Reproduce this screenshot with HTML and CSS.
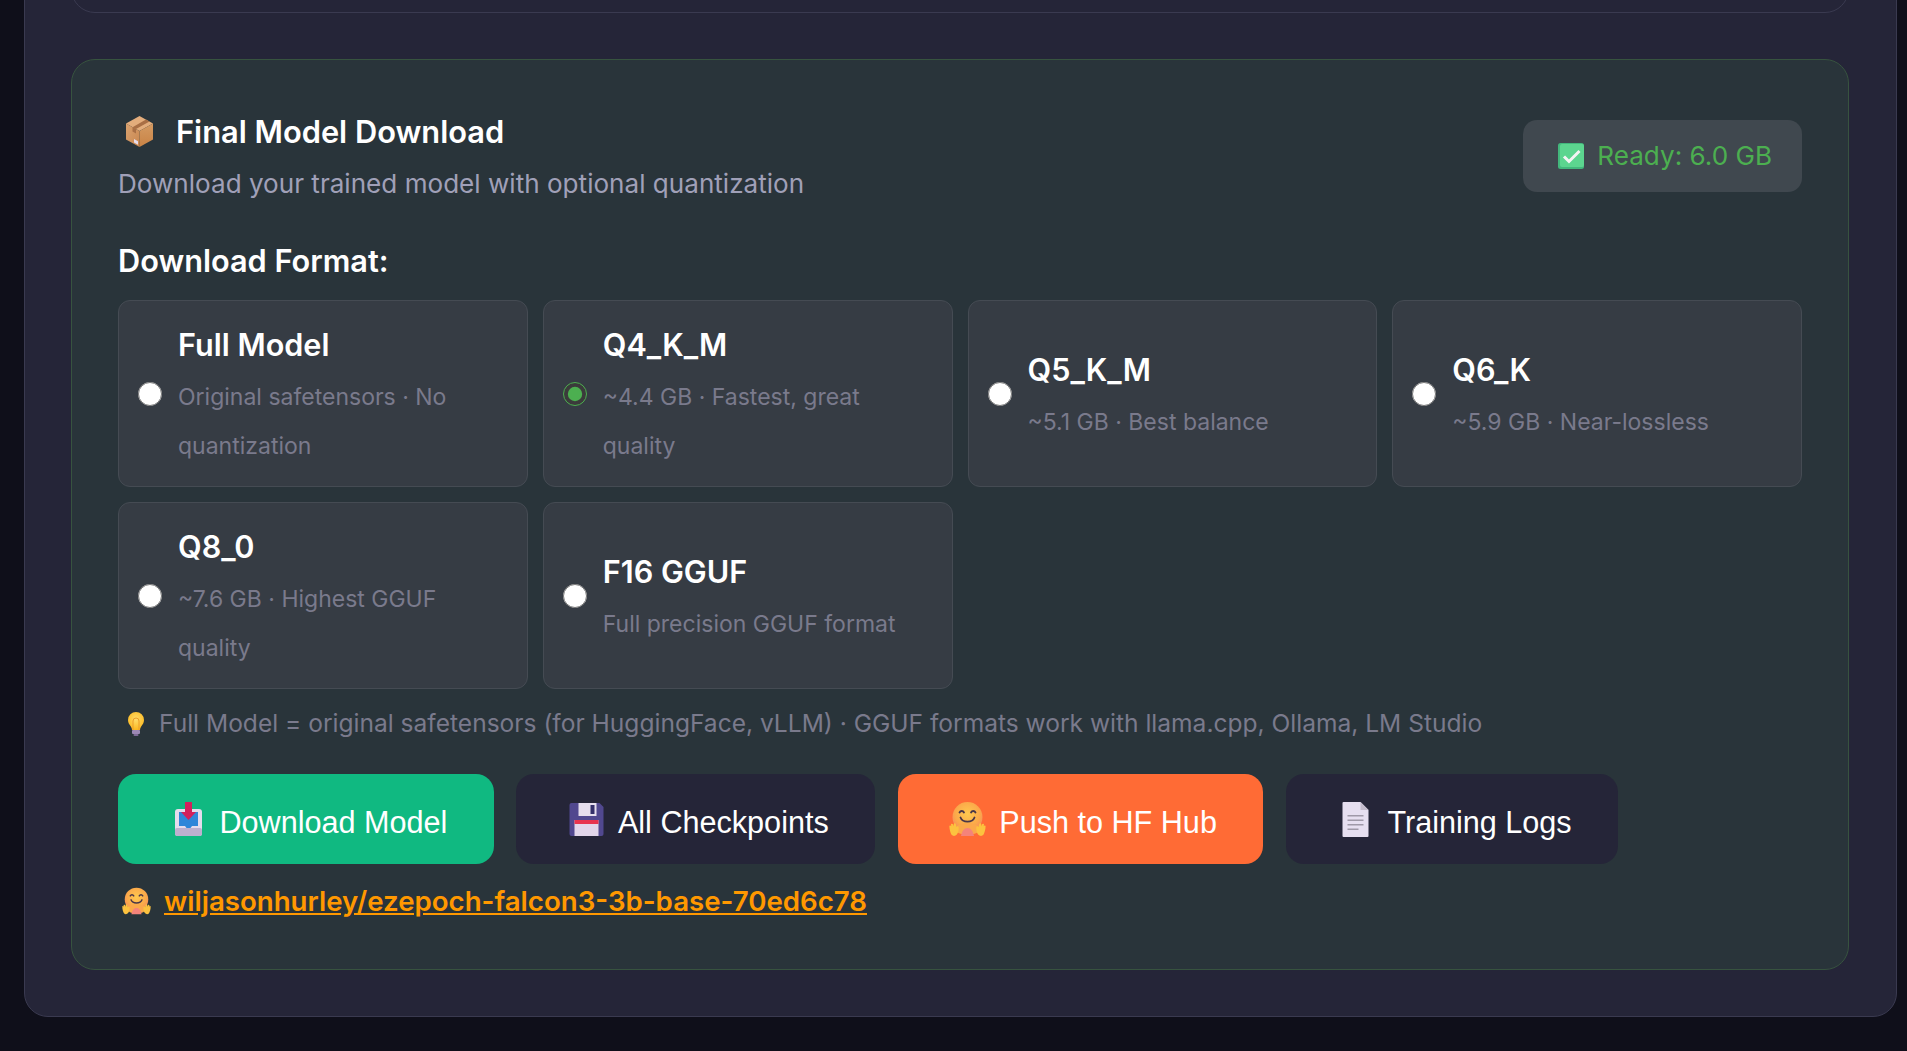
FILE: index.html
```html
<!DOCTYPE html>
<html lang="en">
<head>
    <meta charset="UTF-8">
    <title>Final Model Download</title>
    <link rel="stylesheet" href="styles.css">
</head>
<body>

<svg class="defs" width="0" height="0">
    <defs>
        <radialGradient id="hug-face" cx="50%" cy="40%" r="60%">
            <stop offset="0" stop-color="#ffc94f"/>
            <stop offset="0.7" stop-color="#fba84a"/>
            <stop offset="1" stop-color="#f58a5e"/>
        </radialGradient>
        <linearGradient id="box-left" x1="0" y1="0" x2="1" y2="1">
            <stop offset="0" stop-color="#d9a26f"/>
            <stop offset="1" stop-color="#c9864f"/>
        </linearGradient>
        <linearGradient id="box-right" x1="0" y1="0" x2="0" y2="1">
            <stop offset="0" stop-color="#d49a62"/>
            <stop offset="1" stop-color="#c98345"/>
        </linearGradient>
        <radialGradient id="bulb-glass" cx="50%" cy="40%" r="60%">
            <stop offset="0" stop-color="#ffdc6a"/>
            <stop offset="1" stop-color="#fbb81f"/>
        </radialGradient>
        <symbol id="hug" viewBox="0 0 37 34">
            <circle cx="18.5" cy="15" r="15" fill="url(#hug-face)"/>
            <ellipse cx="18.5" cy="27" rx="12" ry="6" fill="#fba84a"/>
            <path d="M10.5 10.5c1-2 3.5-2 4.5 0M22 10.5c1-2 3.500-2 4.500 0" fill="none" stroke="#4a3648" stroke-width="1.800" stroke-linecap="round"/>
            <path d="M11.500 15.500c2 5.500 12 5.500 14 0" fill="none" stroke="#4a3648" stroke-width="1.800" stroke-linecap="round"/>
            <path d="M12 34c1-5 3-8 6.500-8s5.500 3 6.500 8z" fill="#f4837a"/>
            <path transform="translate(0 7.500) scale(.78)" d="M0.500 21c1-1 2-.5 2.500.500l-.5-2c0-1.500 2-1.500 2.500-.5l1 2.500 0-3c.5-1.500 2.500-1 2.800.5l.7 3.500c.5-1.500 2.500-1.500 2.800 0 .4 3.500-.3 7-2.300 9.500-1.500 2-4.500 2.500-6.500.8C2 30 .3 25 .5 21z" fill="#fcc23f"/>
            <path transform="translate(8.100 7.500) scale(.78)" d="M36.500 21c-1-1-2-.5-2.500.500l.5-2c0-1.500-2-1.500-2.500-.5l-1 2.500 0-3c-.5-1.500-2.500-1-2.800.5l-.7 3.500c-.5-1.500-2.500-1.500-2.800 0-.4 3.500.3 7 2.300 9.500 1.500 2 4.500 2.500 6.500.8C35 30 36.700 25 36.500 21z" fill="#fcc23f"/>
        </symbol>
    </defs>
</svg>

<div class="page">
    <div class="panel">

        <!-- previous step, scrolled away -->
        <div class="prev-card"></div>

        <div class="download-card">

            <div class="card-header">
                <div>
                    <h2 class="card-title">
                        <svg class="icon-box" width="27" height="31" viewBox="0 0 27 31">
                            <path d="M13.500 0 27 7.500 13.500 15 0 7.500z" fill="#e3ad7c"/>
                            <path d="M0 7.500 13.500 15v16L0 23.500z" fill="url(#box-left)"/>
                            <path d="M27 7.500 13.500 15v16L27 23.500z" fill="url(#box-right)"/>
                            <path d="M20 3.600 6.500 11.200 10 13l13.500-7.600z" fill="#a96f45"/>
                            <path d="M6.500 11.200 10 13v4.500l-3.500-2z" fill="#a96f45"/>
                            <path d="M8 23l4 2.200v3.600L8 26.600z" fill="#e6dcec"/>
                        </svg>
                        <span>Final Model Download</span>
                    </h2>
                    <p class="card-sub">Download your trained model with optional quantization</p>
                </div>
                <div class="ready-badge">
                    <svg width="26" height="26" viewBox="0 0 26 26">
                        <rect width="26" height="26" rx="2.500" fill="#43b77c"/>
                        <rect x="2" y="1" width="24" height="23" rx="2" fill="#5cd58f"/>
                        <path d="M6 13.500l5 5L21.500 8" fill="none" stroke="#f4f4f4" stroke-width="3"/>
                    </svg>
                    <span>Ready: 6.0 GB</span>
                </div>
            </div>

            <div class="format-label">Download Format:</div>

            <div class="format-grid">
                <label class="format-option">
                    <input type="radio" name="format">
                    <span class="format-text">
                        <strong>Full Model</strong>
                        <small>Original safetensors · No quantization</small>
                    </span>
                </label>
                <label class="format-option">
                    <input type="radio" name="format" checked>
                    <span class="format-text">
                        <strong>Q4_K_M</strong>
                        <small>~4.4 GB · Fastest, great quality</small>
                    </span>
                </label>
                <label class="format-option">
                    <input type="radio" name="format">
                    <span class="format-text">
                        <strong>Q5_K_M</strong>
                        <small>~5.1 GB · Best balance</small>
                    </span>
                </label>
                <label class="format-option">
                    <input type="radio" name="format">
                    <span class="format-text">
                        <strong>Q6_K</strong>
                        <small>~5.9 GB · Near-lossless</small>
                    </span>
                </label>
                <label class="format-option">
                    <input type="radio" name="format">
                    <span class="format-text">
                        <strong>Q8_0</strong>
                        <small>~7.6 GB · Highest GGUF quality</small>
                    </span>
                </label>
                <label class="format-option">
                    <input type="radio" name="format">
                    <span class="format-text">
                        <strong>F16 GGUF</strong>
                        <small>Full precision GGUF format</small>
                    </span>
                </label>
            </div>

            <p class="format-hint">
                <svg width="16" height="24" viewBox="0 0 16 24">
                    <path d="M8 0a8 8 0 0 0-8 8c0 3 1.500 4.500 2.800 6.500.8 1.200 1.200 2.300 1.200 3.500h8c0-1.200.4-2.300 1.200-3.500C14.500 12.500 16 11 16 8a8 8 0 0 0-8-8z" fill="url(#bulb-glass)"/>
                    <path d="M5 18V9a3 3 0 0 1 6 0v9" fill="none" stroke="#eb9d2a" stroke-width="1"/>
                    <rect x="4" y="18" width="8" height="4" rx="1" fill="#9c88b4"/>
                    <rect x="5.500" y="22" width="5" height="2" rx="1" fill="#7d6a96"/>
                </svg>
                <span>Full Model = original safetensors (for HuggingFace, vLLM) · GGUF formats work with llama.cpp, Ollama, LM Studio</span>
            </p>

            <div class="action-row">
                <button class="btn btn-green">
                    <svg class="btn-icon" width="27" height="34" viewBox="0 0 27 34">
                        <rect y="7" width="27" height="27" rx="3" fill="#e4dced"/>
                        <rect y="26" width="27" height="8" rx="2" fill="#bdb0cf"/>
                        <path d="M4 10h19v14h-6l-1.500 2h-4L10 24H4z" fill="#2f86d9"/>
                        <path d="M10 0h7v10h4l-7.500 8L6 10h4z" fill="#d3205c"/>
                    </svg>
                    <span>Download Model</span>
                </button>
                <button class="btn btn-dark">
                    <svg class="btn-icon" width="34" height="33" viewBox="0 0 34 33">
                        <path d="M2 0h28l4 4v27a2 2 0 0 1-2 2H2a2 2 0 0 1-2-2V2a2 2 0 0 1 2-2z" fill="#51488f"/>
                        <rect x="9" y="0" width="18" height="13" fill="#e6deee"/>
                        <rect x="21" y="2" width="4" height="9" fill="#34306a"/>
                        <rect x="5" y="17" width="24" height="16" fill="#e2d6ea"/>
                        <rect x="5" y="17" width="24" height="4" fill="#e8344f"/>
                    </svg>
                    <span>All Checkpoints</span>
                </button>
                <button class="btn btn-orange">
                    <svg class="btn-icon" width="37" height="34" viewBox="0 0 37 34"><use href="#hug"/></svg>
                    <span>Push to HF Hub</span>
                </button>
                <button class="btn btn-dark">
                    <svg class="btn-icon" width="26" height="35" viewBox="0 0 26 35">
                        <path d="M1 0h17l8 8v26a1 1 0 0 1-1 1H1a1 1 0 0 1-1-1V1a1 1 0 0 1 1-1z" fill="#e6dff0"/>
                        <path d="M18 0l8 8h-8z" fill="#c4bccd"/>
                        <path d="M5 13h16v1.500H5zM5 17.500h16V19H5zM5 22h16v1.500H5zM5 26.500h11V28H5z" fill="#9f99a8"/>
                    </svg>
                    <span>Training Logs</span>
                </button>
            </div>

            <p class="hub-link">
                <svg width="29" height="28"><use href="#hug"/></svg>
                <a href="#">wiljasonhurley/ezepoch-falcon3-3b-base-70ed6c78</a>
            </p>

        </div>
    </div>
</div>

</body>
</html>
```

FILE: styles.css
```css
html, body {
    margin: 0;
    height: 100%;
    overflow: hidden;
}

body {
    background: #0f0f1a;
    color: #fff;
    font-family: 'Inter', sans-serif;
}

.defs {
    display: block;
    height: 0;
}

/* page is scrolled to its end, so everything hangs off the bottom */
.page {
    height: 100%;
    display: flex;
    flex-direction: column;
    justify-content: flex-end;
    padding: 0 10px 34px 24px;
    box-sizing: border-box;
}

.panel {
    flex-shrink: 0;
    background: #252538;
    border: 1px solid #3a3a50;
    border-radius: 24px;
    padding: 0 47px 46px 46px;
}

.prev-card {
    height: 120px;
    border: 1px solid #3a3a50;
    border-radius: 24px;
    margin-bottom: 46px;
}

.download-card {
    background: #29343a;
    border: 1px solid #37533f;
    border-radius: 24px;
    padding: 47px 46px 45px;
}

.card-header {
    display: flex;
    justify-content: space-between;
    align-items: center;
    margin-bottom: 30px;
}

.card-title {
    display: flex;
    align-items: center;
    gap: 23px;
    margin: 0;
    padding-left: 8px;
    font-size: 30.8px;
    font-weight: 600;
    line-height: 49px;
}

.card-sub {
    margin: 6px 0 0;
    font-size: 26.1px;
    line-height: 44px;
    color: #a0a0b8;
}

.ready-badge {
    display: flex;
    align-items: center;
    gap: 13px;
    background: #40484f;
    border-radius: 14px;
    padding: 0 30px 0 35px;
    height: 72px;
    margin-bottom: 2px;
    font-size: 26.1px;
    color: #4caf50;
}

.format-label {
    font-size: 30.7px;
    font-weight: 600;
    line-height: 49px;
    margin-bottom: 15px;
}

.format-grid {
    display: grid;
    grid-template-columns: repeat(4, 1fr);
    gap: 15px;
}

.format-option {
    display: flex;
    align-items: center;
    gap: 16px;
    min-height: 187px;
    box-sizing: border-box;
    padding: 14px 19px;
    background: #363c44;
    border: 1px solid #454b53;
    border-radius: 12px;
}

.format-option input {
    flex-shrink: 0;
    width: 24px;
    height: 24px;
    margin: 0;
    accent-color: #4caf50;
}

.format-text {
    display: block;
    padding-top: 4px;
}

.format-text strong {
    display: block;
    font-size: 30.6px;
    font-weight: 600;
    line-height: 49px;
    margin-bottom: 4px;
}

.format-text small {
    display: block;
    font-size: 23px;
    line-height: 49px;
    color: #7a7a8c;
}

.format-hint {
    display: flex;
    align-items: center;
    gap: 15px;
    margin: 14px 0 30px;
    padding-left: 10px;
    font-size: 24.56px;
    line-height: 41px;
    color: #7a7a8c;
}

.action-row {
    display: flex;
    gap: 22.5px;
}

.btn {
    display: flex;
    align-items: center;
    height: 90px;
    padding: 0 46.5px;
    border: none;
    border-radius: 18px;
    color: #fff;
    font-family: 'Liberation Sans', Arial, sans-serif;
    font-size: 30.6px;
}

.btn span {
    padding-top: 7px;
}

/* emoji cell, same width whatever the glyph */
.btn-icon {
    flex-shrink: 0;
    width: 47px;
    margin-right: 8px;
}

.btn-green {
    background: #10b981;
}

.btn-dark {
    background: #252538;
}

.btn-orange {
    background: #ff6b35;
}

.hub-link {
    display: flex;
    align-items: center;
    gap: 13px;
    margin: 14px 0 0;
    padding-left: 4px;
    font-size: 27.65px;
    font-weight: 600;
    line-height: 46px;
}

.hub-link a {
    color: #ff9800;
}
```
